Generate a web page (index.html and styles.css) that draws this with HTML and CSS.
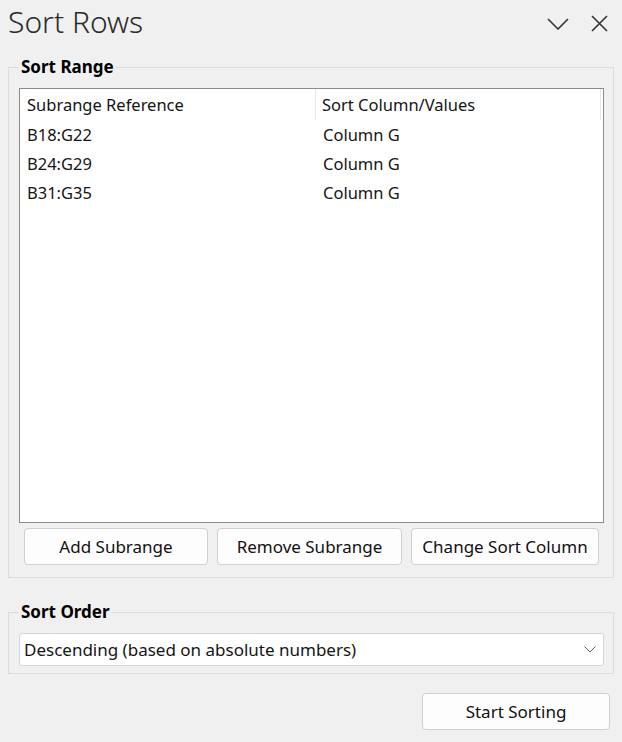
FILE: index.html
```html
<!DOCTYPE html>
<html lang="en">
<head>
<meta charset="utf-8">
<title>Sort Rows</title>
<link rel="stylesheet" href="styles.css">
</head>
<body>
<div class="pane">
  <header class="titlebar">
    <h1 class="title">Sort Rows</h1>
    <div class="title-actions">
      <svg class="icon-chevron" width="22" height="12" viewBox="0 0 22 12"><path d="M1 1 L11 11 L21 1" fill="none" stroke="#333" stroke-width="1.6"/></svg>
      <svg class="icon-close" width="17" height="17" viewBox="0 0 17 17"><path d="M1 1 L16 16 M16 1 L1 16" fill="none" stroke="#333" stroke-width="1.6"/></svg>
    </div>
  </header>

  <fieldset class="group group-range">
    <legend class="group-label">Sort Range</legend>
    <div class="listview">
      <div class="lv-header">
        <div class="lv-col lv-col-first">Subrange Reference</div>
        <div class="lv-col lv-col-second">Sort Column/Values</div>
      </div>
      <div class="lv-row"><span class="lv-cell lv-cell-first">B18:G22</span><span class="lv-cell">Column G</span></div>
      <div class="lv-row"><span class="lv-cell lv-cell-first">B24:G29</span><span class="lv-cell">Column G</span></div>
      <div class="lv-row"><span class="lv-cell lv-cell-first">B31:G35</span><span class="lv-cell">Column G</span></div>
    </div>
    <div class="button-row">
      <button class="btn">Add Subrange</button>
      <button class="btn">Remove Subrange</button>
      <button class="btn">Change Sort Column</button>
    </div>
  </fieldset>

  <fieldset class="group group-order">
    <legend class="group-label">Sort Order</legend>
    <div class="combo">
      <span class="combo-text">Descending (based on absolute numbers)</span>
      <svg class="combo-arrow" width="12" height="7" viewBox="0 0 12 7"><path d="M0.5 0.5 L6 6 L11.5 0.5" fill="none" stroke="#666" stroke-width="1"/></svg>
    </div>
  </fieldset>

  <div class="footer">
    <button class="btn btn-start">Start Sorting</button>
  </div>
</div>
</body>
</html>
```

FILE: styles.css
```css
* { box-sizing: border-box; }

html, body {
  margin: 0;
  padding: 0;
  background: #f0f0f0;
}

body {
  font-family: "Noto Sans", "Open Sans", "Liberation Sans", sans-serif;
  font-size: 16.5px;
  color: #151515;
  width: 622px;
  height: 742px;
  overflow: hidden;
}

.pane {
  padding: 0 8px 0 8px;
}

.titlebar {
  display: flex;
  align-items: center;
  justify-content: space-between;
  height: 46px;
}

.title {
  margin: 0;
  font-weight: 300;
  font-size: 30px;
  color: #2b2b2b;
  line-height: 46px;
  margin-top: -2px;
}

.title-actions {
  display: flex;
  align-items: center;
  gap: 22px;
  padding-right: 6px;
}

.icon-chevron { margin-top: 2px; }

.group {
  margin: 0;
  border: 1px solid #dcdcdc;
  padding: 0 9px 0 10px;
  min-width: 0;
}

.group-label {
  font-weight: 700;
  font-size: 17px;
  line-height: 22px;
  color: #000;
  padding: 0 2px;
  margin-left: 0;
}

.group-range {
  margin-top: 10px;
  padding-bottom: 12px;
}

.listview {
  background: #fff;
  border: 1px solid #8c8c8c;
  height: 435px;
  margin-top: 10px;
}

.lv-header {
  display: flex;
  height: 31px;
  align-items: center;
  margin-right: 2px;
  border-right: 1px solid #e6e6e6;
}

.lv-col {
  line-height: 31px;
}

.lv-col-first {
  width: 296px;
  padding-left: 7px;
  border-right: 1px solid #e6e6e6;
}

.lv-col-second {
  padding-left: 6px;
}

.lv-row {
  display: flex;
  height: 29px;
  align-items: center;
}

.lv-cell-first {
  width: 296px;
  padding-left: 7px;
}

.lv-row .lv-cell + .lv-cell {
  padding-left: 7px;
}

.button-row {
  display: grid;
  grid-template-columns: 184px 185px 188px;
  gap: 9px;
  padding: 5px 4px 0 5px;
}

.btn {
  font-family: inherit;
  font-size: 17px;
  color: #111;
  background: #fdfdfd;
  border: 1px solid #d0d0d0;
  border-radius: 4px;
  height: 37px;
  padding: 0;
}

.group-order {
  margin-top: 23px;
  padding-bottom: 7px;
}

.combo {
  display: flex;
  align-items: center;
  justify-content: space-between;
  background: #fff;
  border: 1px solid #d6d6d6;
  border-radius: 3px;
  height: 33px;
  padding: 0 7px 0 4px;
  margin-top: 10px;
}

.combo-text {
  font-size: 17px;
}

.footer {
  display: flex;
  justify-content: flex-end;
  padding-top: 19px;
  padding-right: 4px;
}

.btn-start {
  width: 188px;
  height: 37px;
}
```
